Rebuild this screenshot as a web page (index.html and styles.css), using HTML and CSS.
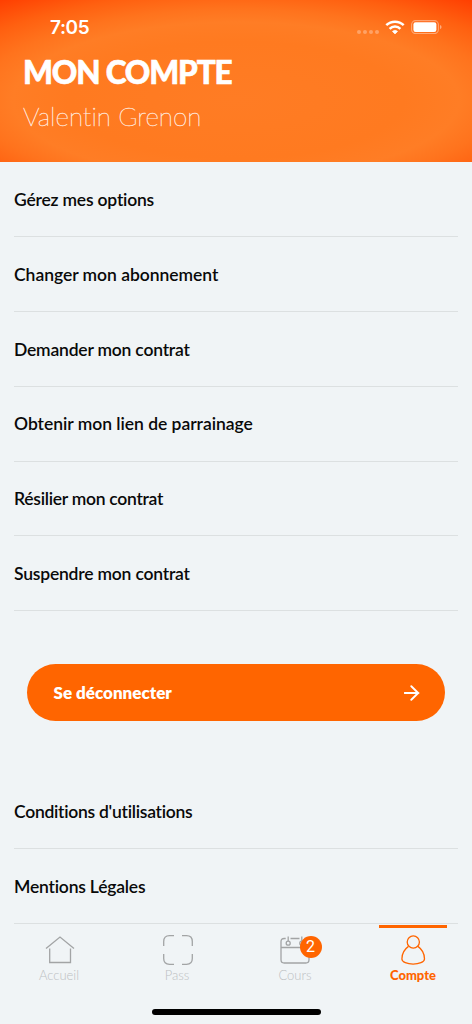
FILE: index.html
```html
<!DOCTYPE html>
<html lang="fr">
<head>
<meta charset="utf-8">
<title>Mon compte</title>
<link rel="stylesheet" href="styles.css">
</head>
<body>
<div class="screen">
  <header class="header">
    <div class="status">
      <span class="time">7:05</span>
      <div class="status-icons">
        <svg class="dots" width="22" height="4" viewBox="0 0 22 4"><circle cx="2" cy="2" r="2"/><circle cx="8" cy="2" r="2"/><circle cx="14" cy="2" r="2"/><circle cx="20" cy="2" r="2"/></svg>
        <svg class="wifi" width="20" height="15" viewBox="0 0 20 15" fill="none" stroke="#fff" stroke-width="2.5"><path d="M1.3 5.2a12.4 12.4 0 0 1 17.4 0M4.6 8.8a7.7 7.7 0 0 1 10.8 0"/><path d="M10 14 7.4 11.4a3.8 3.8 0 0 1 5.2 0z" fill="#fff" stroke="#fff" stroke-width=".6"/></svg>
        <svg class="battery" width="31" height="14" viewBox="0 0 31 14"><rect x=".6" y=".6" width="26.8" height="13" rx="4" fill="none" stroke="#fff" stroke-opacity=".4" stroke-width="1.1"/><rect x="2.4" y="2.2" width="23" height="9.8" rx="2.2" fill="#fff"/><path d="M29 5v4.2q1.6-.6 1.6-2.1T29 5z" fill="#fff" opacity=".45"/></svg>
      </div>
    </div>
    <h1 class="title">MON COMPTE</h1>
    <p class="name">Valentin Grenon</p>
  </header>
  <main class="content">
    <ul class="list">
      <li class="tight">Gérez mes options</li>
      <li>Changer mon abonnement</li>
      <li class="tight">Demander mon contrat</li>
      <li>Obtenir mon lien de parrainage</li>
      <li class="tighter">Résilier mon contrat</li>
      <li class="tight">Suspendre mon contrat</li>
    </ul>
    <button class="logout">
      <span>Se déconnecter</span>
      <svg width="16" height="16" viewBox="0 0 16 16" fill="none" stroke="#fff" stroke-width="1.9"><path d="M.6 8H14.500M7.300 1.200 14.200 8l-6.900 6.800" stroke-linecap="round"/></svg>
    </button>
    <ul class="list">
      <li class="tighter">Conditions d'utilisations</li>
      <li class="tight">Mentions Légales</li>
    </ul>
  </main>
  <nav class="tabs">
    <a class="tab">
      <svg class="nudge" width="30" height="30" viewBox="0 0 30 30"><path d="M1 13.500 15 2l14 11.500M4.700 13.500V27.500H25.500V13.500"/></svg>
      <span>Accueil</span>
    </a>
    <a class="tab">
      <svg class="nudge" width="30" height="30" viewBox="0 0 30 30"><path d="M.7 11V6.500Q.7.700 6.500.7H11M19 .7h4.500Q29.300.7 29.300 6.500V11M29.300 19v4.500q0 5.800-5.800 5.800H19M11 29.300H6.500Q.7 29.300.7 23.500V19"/></svg>
      <span>Pass</span>
    </a>
    <a class="tab">
      <div class="calendar">
        <svg width="30" height="30" viewBox="0 0 30 30"><path d="M5.700 3.500H4.200Q1 3.500 1 6.700V24.800Q1 28 4.200 28H25.800Q29 28 29 24.800V6.700Q29 3.500 25.800 3.500H24.500M10.500 3.500H19.500M1 12.500H29M8.200 1.500V6.200M21.800 1.500V6.200"/><circle cx="8.200" cy="8.200" r="2"/><circle cx="21.800" cy="8.200" r="2"/></svg>
        <b class="badge">2</b>
      </div>
      <span>Cours</span>
    </a>
    <a class="tab active">
      <svg width="30" height="30" viewBox="0 0 30 30"><circle cx="15.300" cy="7" r="6.100"/><path d="M10.500 11.400C6.500 14.200 3.900 19.500 3.900 24c0 3 5.400 5.100 11.200 5.100S26.500 27 26.500 24c0-4.500-2.600-9.800-6.600-12.600"/></svg>
      <span>Compte</span>
    </a>
    <i class="home-bar"></i>
  </nav>
</div>
</body>
</html>
```
FILE: styles.css
```css
* { box-sizing: border-box; }
body { margin: 0; background: #f0f4f6; font-family: Lato, sans-serif; font-variant-ligatures: none; color: #090909; }
.screen { width: 472px; height: 1024px; overflow: hidden; display: flex; flex-direction: column; }
.header {
  height: 162.400px; flex: none; padding-top: 15.500px; color: #fff;
  background: radial-gradient(ellipse 372px 130px at 236px 100px, #ff7c24 0%, #ff7a20 45%, #ff7d25 60%, #ff731d 70%, #ff6010 83%, #ff3c00 101%);
}
.status { height: 24px; padding: 0 30px 0 50px; display: flex; justify-content: space-between; align-items: center; }
.time { font: 600 19px/24px Inter, sans-serif; letter-spacing: -.4px; }
.status-icons { display: flex; align-items: center; margin-top: -1px; }
.dots { fill: #fff; opacity: .3; margin: 9px 6px 0 0; }
.wifi { margin-right: 6px; }
.title { margin: 13px 0 0 23px; font-size: 31.500px; font-weight: 900; line-height: 39px; letter-spacing: -1.150px; -webkit-text-stroke: .6px #fff; white-space: nowrap; }
.name { margin: 8.500px 0 0 23px; font-size: 26px; font-weight: 100; line-height: 32px; -webkit-text-stroke: .4px #fff; opacity: .85; white-space: nowrap; }
.content { flex: none; height: 761.600px; overflow: hidden; }
.list { list-style: none; margin: 0; padding: 0 14px; }
.list li { height: 74.800px; padding-top: .6px; border-bottom: 1px solid #dce0e1; display: flex; align-items: center; font-size: 17.500px; font-weight: 600; letter-spacing: -.03px; white-space: nowrap; }
.list .tight { letter-spacing: -.2px; }
.list .tighter { letter-spacing: -.27px; }
.logout {
  display: flex; align-items: center; justify-content: space-between;
  width: 418.500px; height: 57.500px; margin: 52.800px 0 52.700px 26.500px; padding: 0 25px 0 27px;
  border: 0; border-radius: 29px; background: #ff6500; color: #fff;
  font: 800 17px/24px Lato, sans-serif;
}
.tabs { position: relative; flex: 1; display: grid; grid-template-columns: repeat(4, 118px); align-items: start; }
.tab { display: flex; flex-direction: column; align-items: center; padding-top: 11px; font-size: 13px; line-height: 18px; font-weight: 300; color: #bcc0c2; }
.tab svg { display: block; fill: none; stroke: #a2a4a5; stroke-width: 1.300; }
.tab .nudge { margin-left: 1px; }
.tab > span { margin-top: 1px; }
.calendar { position: relative; }
.badge { position: absolute; left: 19.500px; top: 1px; width: 22px; height: 22px; border-radius: 50%; background: #ff6500; color: #fff; font: 400 16px/22px Roboto, sans-serif; text-align: center; }
.tab.active { color: #ff6500; font-weight: 900; background: linear-gradient(#ff6500, #ff6500) 25px 1px / 68px 3px no-repeat; }
.tab.active svg { stroke: #ff6500; }
.home-bar { position: absolute; left: 152px; bottom: 9px; width: 169px; height: 6px; border-radius: 3px; background: #000; }
```
